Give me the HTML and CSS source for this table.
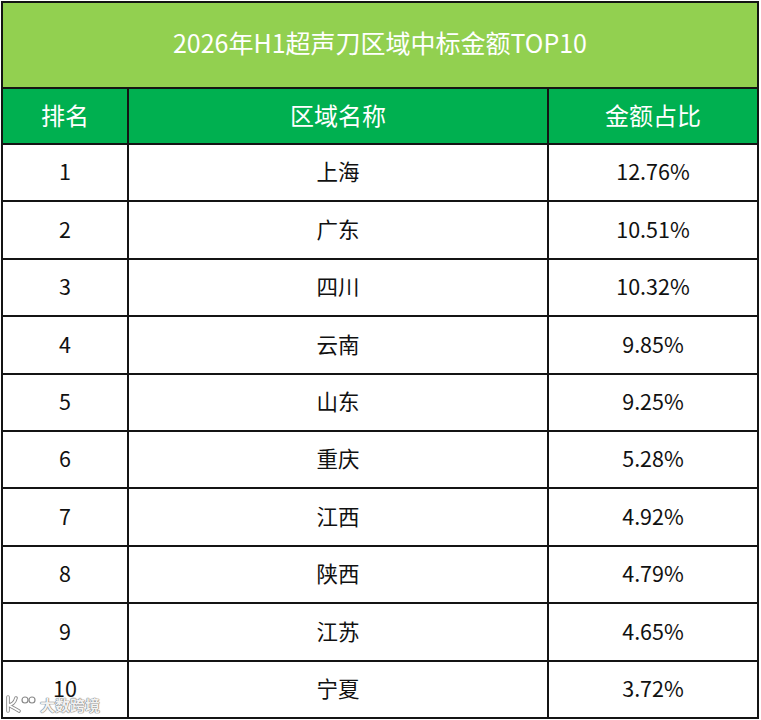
FILE: index.html
```html
<!DOCTYPE html>
<html lang="zh">
<head>
<meta charset="utf-8">
<link rel="stylesheet" href="styles.css">
</head>
<body>
<div class="page">
  <div class="grid">
    <div class="cell title">2026年H1超声刀区域中标金额TOP10</div>
    <div class="cell head">排名</div>
    <div class="cell head">区域名称</div>
    <div class="cell head">金额占比</div>
    <div class="cell">1</div><div class="cell">上海</div><div class="cell">12.76%</div>
    <div class="cell">2</div><div class="cell">广东</div><div class="cell">10.51%</div>
    <div class="cell">3</div><div class="cell">四川</div><div class="cell">10.32%</div>
    <div class="cell">4</div><div class="cell">云南</div><div class="cell">9.85%</div>
    <div class="cell">5</div><div class="cell">山东</div><div class="cell">9.25%</div>
    <div class="cell">6</div><div class="cell">重庆</div><div class="cell">5.28%</div>
    <div class="cell">7</div><div class="cell">江西</div><div class="cell">4.92%</div>
    <div class="cell">8</div><div class="cell">陕西</div><div class="cell">4.79%</div>
    <div class="cell">9</div><div class="cell">江苏</div><div class="cell">4.65%</div>
    <div class="cell">10</div><div class="cell">宁夏</div><div class="cell">3.72%</div>
  </div>
  <div class="watermark">
    <svg class="wm-logo" width="32" height="18" viewBox="0 0 32 18">
      <path d="M3 2 L3 16 M3 10 Q9 10 11 3 M5 11 Q9 13 14 16" fill="none" stroke="#8a8a8a" stroke-width="3.6" stroke-linecap="round"/>
      <path d="M3 2 L3 16 M3 10 Q9 10 11 3 M5 11 Q9 13 14 16" fill="none" stroke="#ffffff" stroke-width="1.8" stroke-linecap="round"/>
      <circle cx="20" cy="5" r="3" fill="#fff" stroke="#8a8a8a" stroke-width="1.2"/>
      <circle cx="27" cy="5" r="3" fill="#fff" stroke="#8a8a8a" stroke-width="1.2"/>
    </svg>
    <span class="wm-text">大数跨境</span>
  </div>
</div>
</body>
</html>
```
FILE: styles.css
```css
html, body {
  margin: 0;
  padding: 0;
  background: #ffffff;
}
.page {
  position: relative;
  width: 761px;
  height: 720px;
  padding: 1px 0 0 1px;
  box-sizing: border-box;
  font-family: "Noto Sans CJK SC", "Noto Sans", sans-serif;
}
.grid {
  display: grid;
  grid-template-columns: 124px 418px 208px;
  grid-template-rows: 84px 54px repeat(10, 55.4px);
  gap: 2px;
  padding: 2px;
  background: #141414;
  width: max-content;
}
.cell {
  background: #ffffff;
  color: #111111;
  display: flex;
  align-items: center;
  justify-content: center;
  font-size: 21.5px;
  line-height: 1;
  padding-bottom: 3px;
  box-sizing: border-box;
}
.title {
  grid-column: 1 / 4;
  background: #92d050;
  color: #ffffff;
  font-size: 25px;
  padding-bottom: 5px;
}
.head {
  background: #00b050;
  color: #ffffff;
  font-size: 24px;
  padding-bottom: 2px;
}
.watermark {
  position: absolute;
  left: 5px;
  top: 695px;
  display: flex;
  align-items: center;
  gap: 3px;
}
.wm-text {
  font-size: 15px;
  line-height: 1;
  color: rgba(255, 255, 255, 0.92);
  font-weight: bold;
  text-shadow: 0 0 1px #777, 0 0 1px #777, 0 0 1px #777;
}
```
